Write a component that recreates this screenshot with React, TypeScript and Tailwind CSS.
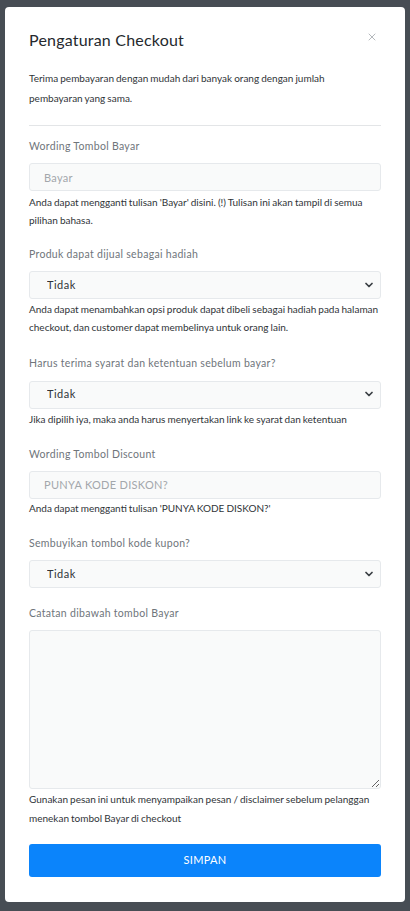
import { ChevronDown, X } from "lucide-react";

const font = { fontFamily: "Lato, 'Open Sans', sans-serif" };

function Label({ children }: { children: string }) {
  return (
    <div className="h-[18px] text-[10.5px] leading-[18px] tracking-[0.3px] text-[#6f757b]">
      {children}
    </div>
  );
}

function Help({ children }: { children: string }) {
  return (
    <p className="text-[10px] leading-[18px] text-[#2f3438] [word-spacing:-0.5px]">{children}</p>
  );
}

function Select() {
  return (
    <div className="relative mt-2">
      <select
        defaultValue="Tidak"
        className="h-[28px] w-full appearance-none rounded-[3px] border border-[#e6e9ec] bg-[#f9fafa] pl-[17px] text-[11px] tracking-[0.5px] text-[#2f3438] outline-none"
      >
        <option>Tidak</option>
        <option>Ya</option>
      </select>
      <ChevronDown
        className="pointer-events-none absolute right-[6px] top-[8px] h-[12px] w-[12px] text-[#3a3f44]"
        strokeWidth={3.5}
      />
    </div>
  );
}

export default function App() {
  return (
    <div className="min-h-[911px] w-full bg-[#474d54] px-[5px] pt-[7px]" style={font}>
      <div className="rounded-[4px] bg-white px-[24px] pb-[25px] pt-[20px]">
        <div className="flex items-center justify-between">
          <h2 className="text-[16px] leading-[26px] text-[#25292d] tracking-[0.2px]">
            Pengaturan Checkout
          </h2>
          <X className="mr-[3px] -mt-[6px] h-[12px] w-[12px] text-[#9ba0a5]" strokeWidth={1.5} />
        </div>

        <p className="mt-[15px] pr-[12px] text-[10px] leading-[20px] text-[#2f3438] [word-spacing:-0.5px]">
          Terima pembayaran dengan mudah dari banyak orang dengan jumlah pembayaran yang sama.
        </p>

        <div className="mt-[17px] border-t border-[#e3e5e7]" />

        <div className="mt-[11px]">
          <Label>Wording Tombol Bayar</Label>
          <input
            placeholder="Bayar"
            className="mt-2 h-[28px] w-full rounded-[3px] border border-[#e6e9ec] bg-[#f9fafa] pl-[14px] text-[11px] tracking-[0.3px] text-[#2f3438] placeholder:text-[#a3a7ab] outline-none"
          />
          <div className="mt-[2px]">
            <Help>Anda dapat mengganti tulisan 'Bayar' disini. (!) Tulisan ini akan tampil di semua pilihan bahasa.</Help>
          </div>
        </div>

        <div className="mt-[16px]">
          <Label>Produk dapat dijual sebagai hadiah</Label>
          <Select />
          <div className="mt-[1px]">
            <Help>Anda dapat menambahkan opsi produk dapat dibeli sebagai hadiah pada halaman checkout, dan customer dapat membelinya untuk orang lain.</Help>
          </div>
        </div>

        <div className="mt-[18px]">
          <Label>Harus terima syarat dan ketentuan sebelum bayar?</Label>
          <Select />
          <div className="mt-[1px]">
            <Help>Jika dipilih iya, maka anda harus menyertakan link ke syarat dan ketentuan</Help>
          </div>
        </div>

        <div className="mt-[17px]">
          <Label>Wording Tombol Discount</Label>
          <input
            placeholder="PUNYA KODE DISKON?"
            className="mt-2 h-[28px] w-full rounded-[3px] border border-[#e6e9ec] bg-[#f9fafa] pl-[14px] text-[11px] tracking-[0.3px] text-[#2f3438] placeholder:text-[#a3a7ab] outline-none"
          />
          <Help>Anda dapat mengganti tulisan 'PUNYA KODE DISKON?'</Help>
        </div>

        <div className="mt-[17px]">
          <Label>Sembuyikan tombol kode kupon?</Label>
          <Select />
        </div>

        <div className="mt-[16px]">
          <Label>Catatan dibawah tombol Bayar</Label>
          <textarea className="mt-2 block h-[159px] w-full rounded-[3px] border border-[#e6e9ec] bg-[#f9fafa] outline-none" />
          <div className="mt-[1px]">
            <p className="text-[10px] leading-[19px] text-[#2f3438] [word-spacing:-0.5px]">
              Gunakan pesan ini untuk menyampaikan pesan / disclaimer sebelum pelanggan menekan tombol Bayar di checkout
            </p>
          </div>
        </div>

        <button className="mt-[16px] h-[33px] w-full rounded-[3px] bg-[#0b84fb] text-[11px] tracking-[0.3px] text-white">
          SIMPAN
        </button>
      </div>
    </div>
  );
}
